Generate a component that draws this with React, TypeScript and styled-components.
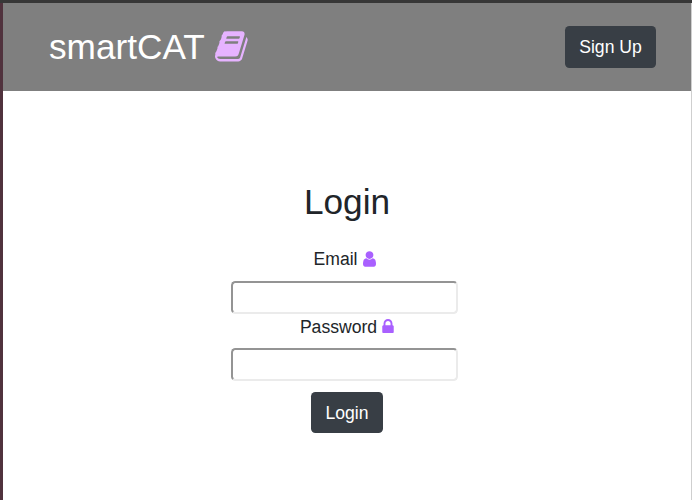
import React from "react";
import styled, { createGlobalStyle } from "styled-components";

const GlobalStyle = createGlobalStyle`
  *, *::before, *::after { box-sizing: border-box; }
  html, body, #root { height: 100%; margin: 0; }
  body {
    overflow: hidden;
    background: #fff;
    color: #212529;
    font-family: "Liberation Sans", Arial, sans-serif;
    font-size: 17.6px;
    line-height: 26.4px;
  }
`;

const Frame = styled.div`
  height: 100%;
  display: flex;
  flex-direction: column;
  border-top: 3px solid #303030;
  border-image: linear-gradient(#373737 66%, #252525 67%) 3 0 0 0;
`;

const Window = styled.div`
  flex: 1;
  border-left: 3px solid #50323d;
  border-right: 1px solid #cfcfcf;
`;

const Header = styled.header`
  height: 88px;
  display: flex;
  align-items: center;
  justify-content: space-between;
  padding: 0 35px 0 46px;
  background: #7f7f7f;
`;

const Brand = styled.h1`
  display: flex;
  gap: 10px;
  margin: 0;
  color: #fff;
  font-size: 35.2px;
  font-weight: 400;
  line-height: 42px;
`;

const Button = styled.button<{ $width: number; $height: number; $drop?: number }>`
  width: ${(p) => p.$width}px;
  height: ${(p) => p.$height}px;
  padding: ${(p) => p.$drop ?? 0}px 0 0;
  border: 0;
  border-radius: 4.4px;
  background: #383e45;
  color: #fff;
  font: inherit;
`;

const Form = styled.form`
  width: 227px;
  margin: 90px 0 0 228px;
  display: flex;
  flex-direction: column;
`;

const Title = styled.h2`
  margin: 0 0 23px 5px;
  font-size: 35.2px;
  font-weight: 400;
  line-height: 42px;
  text-align: center;
`;

const Label = styled.label<{ $space: number; $indent: number }>`
  display: flex;
  justify-content: center;
  gap: 5px;
  height: 26px;
  margin: 0 0 ${(p) => p.$space}px ${(p) => p.$indent}px;
`;

const Input = styled.input`
  width: 227px;
  height: 33px;
  padding: 1px 2px;
  border: 2px solid;
  border-color: #949494 #ebebeb #ebebeb #949494;
  border-radius: 4.4px;
  background: #fff;
  font: inherit;
  outline: 0;
`;

const Actions = styled.div`
  display: flex;
  margin: 11px 0 0 80px;
`;

const Icon = styled.svg<{ $top: number; $color: string }>`
  flex: none;
  margin-top: ${(p) => p.$top}px;
  fill: ${(p) => p.$color};
`;

const BookIcon = () => (
  <Icon $top={4} $color="#e6b3ff" width="33" height="33" viewBox="64 64 1680 1680" aria-hidden="true">
    <path d="M1703 478q40 57 18 129l-275 906q-19 64-76.5 107.5t-122.5 43.5h-923q-77 0-148.5-53.5t-99.5-131.5q-24-67-2-127 0-4 3-27t4-37q1-8-3-21.5t-3-19.5q2-11 8-21t16.5-23.5 16.5-23.5q23-38 45-91.5t30-91.5q3-10 .5-30t-.5-28q3-11 17-28t17-23q21-36 42-92t25-90q1-9-2.5-32t.5-28q4-13 22-30.5t22-22.5q19-26 42.5-84.5t27.5-96.5q1-8-3-25.5t-2-26.5q2-8 9-18t18-23 17-21q8-12 16.5-30.5t15-35 16-36 19.5-32 26.5-23.5 36-11.5 47.5 5.5l-1 3q38-9 51-9h761q74 0 114 56t18 130l-274 906q-36 119-71.5 153.5t-128.5 34.5h-869q-27 0-38 15-11 16-1 43 24 70 144 70h923q29 0 56-15.5t35-41.5l300-987q7-22 5-57 38 15 59 43zm-1064 2q-4 13 2 22.5t20 9.5h608q13 0 25.5-9.5t16.5-22.5l21-64q4-13-2-22.5t-20-9.5h-608q-13 0-25.5 9.5t-16.5 22.5zm-83 256q-4 13 2 22.5t20 9.5h608q13 0 25.5-9.5t16.5-22.5l21-64q4-13-2-22.5t-20-9.5h-608q-13 0-25.5 9.5t-16.5 22.5z" />
  </Icon>
);

const UserIcon = () => (
  <Icon $top={5} $color="#a960ff" width="13" height="16" viewBox="256 110 1280 1575" aria-hidden="true">
    <path d="M1536 1399q0 109-62.5 187t-150.5 78h-854q-88 0-150.5-78t-62.5-187q0-85 8.5-160.5t31.5-152 58.5-131 94-89 134.5-34.5q131 128 313 128t313-128q76 0 134.5 34.5t94 89 58.5 131 31.5 152 8.5 160.5zm-256-887q0 159-112.5 271.5t-271.5 112.5-271.5-112.5-112.5-271.5 112.5-271.5 271.5-112.5 271.5 112.5 112.5 271.5z" />
  </Icon>
);

const LockIcon = () => (
  <Icon $top={5} $color="#a960ff" width="12" height="14" viewBox="310 128 1172 1408" aria-hidden="true">
    <path d="M640 768h512v-192q0-106-75-181t-181-75-181 75-75 181v192zm832 96v576q0 40-28 68t-68 28h-960q-40 0-68-28t-28-68v-576q0-40 28-68t68-28h32v-192q0-184 132-316t316-132 316 132 132 316v192h32q40 0 68 28t28 68z" />
  </Icon>
);

export default function App() {
  return (
    <>
      <GlobalStyle />
      <Frame>
        <Window>
          <Header>
            <Brand>
              smartCAT
              <BookIcon />
            </Brand>
            <Button $width={91} $height={42} type="button">Sign Up</Button>
          </Header>
          <Form onSubmit={(e) => e.preventDefault()}>
            <Title>Login</Title>
            <Label htmlFor="email" $space={9} $indent={0}>
              Email
              <UserIcon />
            </Label>
            <Input id="email" type="email" />
            <Label htmlFor="password" $space={8} $indent={5}>
              Password
              <LockIcon />
            </Label>
            <Input id="password" type="password" />
            <Actions>
              <Button $width={72} $height={41} $drop={2} type="submit">Login</Button>
            </Actions>
          </Form>
        </Window>
      </Frame>
    </>
  );
}
